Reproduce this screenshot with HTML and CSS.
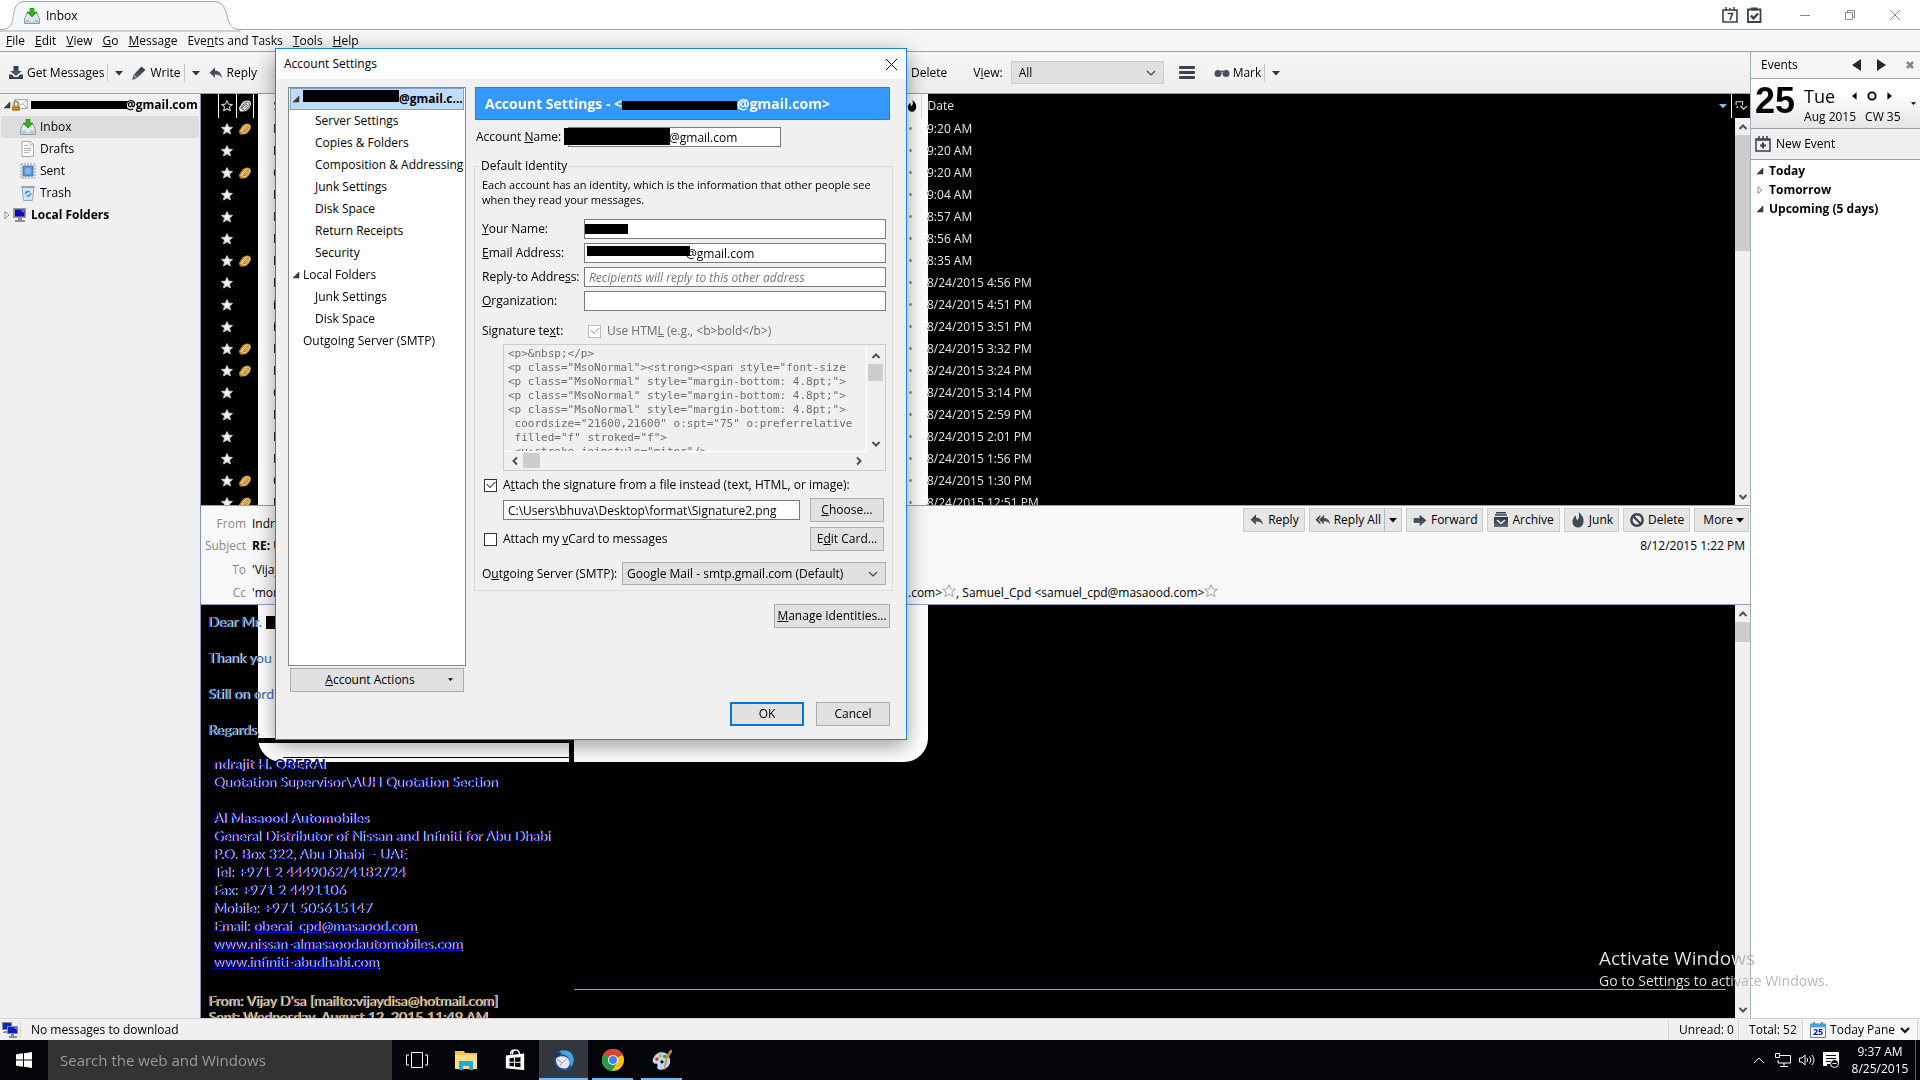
FILE: index.html
```html
<!DOCTYPE html>
<html lang="en">
<head>
<meta charset="utf-8">
<title>Inbox</title>
<link rel="stylesheet" href="styles.css">
</head>
<body>
<svg class="defs" aria-hidden="true">
  <defs>
    <linearGradient id="slate" x1="0" y1="0" x2="0" y2="1"><stop offset="0" stop-color="#2b3640"/><stop offset="1" stop-color="#5d6a76"/></linearGradient>
    <symbol id="i-inbox" viewBox="0 0 16 16"><path d="M3 5h10l2.500 6v4.500H.5V11z" fill="#dfe6ec" stroke="#8b98a5"/><path d="M1.500 11.500h3.500l1 2h4l1-2h3.500v3h-13z" fill="#b4c2cf"/><path d="M6 0h4v4h3L8 9 3 4h3z" fill="#2fb516" stroke="#1a850a" stroke-width=".6"/></symbol>
    <symbol id="i-draft" viewBox="0 0 16 16"><path d="M2 .5h8.500l3 3v12H2z" fill="#fafafa" stroke="#a8a8a8"/><path d="M10 .5V4h3.500M4 4.500h4M4 7.500h7M4 9.500h7M4 11.500h5" fill="none" stroke="#b5b5b5"/></symbol>
    <symbol id="i-sent" viewBox="0 0 16 16"><path d="M1 1h14v14H1z" fill="#f4f4f4" stroke="#9a9a9a" stroke-dasharray="2 1"/><path d="M3 3h10v10H3z" fill="#5e9ad6" stroke="#3a74b4"/><circle cx="8" cy="8" r="3" fill="#86b7e6"/></symbol>
    <symbol id="i-trash" viewBox="0 0 16 16"><path d="M2 2h12l-1.500 13.500h-9z" fill="#d3e5f4" stroke="#8fa5ba"/><path d="M1.500 2h13" stroke="#9aa5b0" stroke-width="2"/><path d="M5.500 9a2.500 2.500 0 0 1 4-2M10.500 8a2.500 2.500 0 0 1-4 2.500" fill="none" stroke="#3d8cd0" stroke-width="1.500"/></symbol>
    <symbol id="i-account" viewBox="0 0 16 16"><path d="M2.500 2.500h13v9h-13z" fill="#f6f6f6" stroke="#a9a9a9"/><path d="M3 3l6 5 6-5M3 11l4-4M15 11l-4-4" fill="none" stroke="#b4b4b4"/><path d="M2 9V6.500a2 2 0 0 1 4 0V9" fill="none" stroke="#a88a45" stroke-width="1.500"/><path d="M0 8h8v6H0z" fill="#cda650"/><path d="M0 10.500h8M0 12.500h8" stroke="#8d6d28"/></symbol>
    <symbol id="i-pc" viewBox="0 0 16 16"><path d="M1 1h13v10H1z" fill="#9c9c9c"/><path d="M3 2.500h9.500v7H3z" fill="#0b0bb4"/><path d="M8 3l4 0v3z" fill="#5c6cff"/><path d="M6 11h4v2H6zM3 13h10v2H3z" fill="#8f8f96"/></symbol>
    <symbol id="i-net" viewBox="0 0 16 16"><path d="M0 0h10v8H0zM3 9h3v2H1v-1z" fill="#8b8b93"/><path d="M1 1h8v6H1z" fill="#1020c8"/><path d="M5 4h11v8H5zM9 12h3v2h3v2H7v-2h2z" fill="#8b8b93"/><path d="M6 5h9v6H6z" fill="#1020c8"/><path d="M11 5h4v3z" fill="#5878ff"/></symbol>
    <symbol id="i-get" viewBox="0 0 16 16"><path d="M5.500 1h5v5h3.500L8 11 2 6h3.500z" fill="url(#slate)"/><path d="M1 9.500h3l2 2.500h4l2-2.500h3V14H1z" fill="#36424d"/></symbol>
    <symbol id="i-write" viewBox="0 0 16 16"><path d="M10.500 1.500l4 3.500-9 8.500L1 15l1.500-5z" fill="url(#slate)"/><path d="M3 10l2.500 3" stroke="#f4f4f4" stroke-width=".8"/></symbol>
    <symbol id="i-reply" viewBox="0 0 16 16"><path d="M7 2.500v3.200c4 0 6.500 2.500 7 7.300-1.500-2.500-3.500-3.500-7-3.500V13L1.500 7.700z" fill="url(#slate)"/></symbol>
    <symbol id="i-replyall" viewBox="0 0 18 16"><path d="M6 2.500v2.200L3.500 7.700 6 10.500V13L.5 7.700z" fill="#36424d"/><path d="M10 2.500v3.200c4 0 6.500 2.500 7 7.300-1.500-2.500-3.500-3.500-7-3.500V13L4.500 7.700z" fill="url(#slate)"/></symbol>
    <symbol id="i-forward" viewBox="0 0 16 16"><path d="M2 6.500h6V3.500L14 8.500l-6 5v-3H2z" fill="url(#slate)" stroke="#2b3640" stroke-width=".6"/></symbol>
    <symbol id="i-archive" viewBox="0 0 16 16"><path d="M3 .8h10M2 3h12" stroke="#36424d" stroke-width="1.400"/><path d="M1 5h14v10H1z" fill="url(#slate)"/><path d="M4 8l4 3.500L12 8" fill="none" stroke="#fff" stroke-width="1.300"/></symbol>
    <symbol id="i-flame" viewBox="0 0 16 16"><path d="M8.500 0C13 4 14 6.500 13.500 10a5.500 5.500 0 0 1-11 0C2.300 7.500 3.500 5 6 3.500c0 2 0 3.500 1.200 4.500C9.500 6.500 9.500 3 8.500 0z" fill="currentColor"/></symbol>
    <symbol id="i-ban" viewBox="0 0 16 16"><circle cx="8" cy="8" r="5.700" fill="none" stroke="#36424d" stroke-width="2.400"/><path d="M4.500 4.500l7 7" stroke="#36424d" stroke-width="2.200"/></symbol>
    <symbol id="i-glasses" viewBox="0 0 16 16"><circle cx="4" cy="8.500" r="3.500" fill="#46525d"/><circle cx="12" cy="8.500" r="3.500" fill="#46525d"/><path d="M6 7q2-1.500 4 0" stroke="#46525d" fill="none" stroke-width="1.300"/></symbol>
    <symbol id="i-caret" viewBox="0 0 8 8"><path d="M0 2h8L4 6.500z" fill="currentColor"/></symbol>
    <symbol id="i-chev" viewBox="0 0 10 10"><path d="M1 3l4 4 4-4" fill="none" stroke="currentColor" stroke-width="1.200"/></symbol>
    <symbol id="i-sb" viewBox="0 0 10 10"><path d="M1.500 7L5 3.500 8.500 7" fill="none" stroke="#505050" stroke-width="2"/></symbol>
    <symbol id="i-star" viewBox="0 0 14 14"><path d="M7 .8l1.800 4 4.400.4-3.300 2.900 1 4.400L7 10.200l-3.900 2.300 1-4.400L.8 5.200l4.400-.4z" fill="currentColor" stroke="var(--edge)" stroke-width="1.200" stroke-linejoin="round"/></symbol>
    <symbol id="i-clip" viewBox="0 0 14 14"><path d="M0 9L4 3Q6.500.5 10 .5q3.500 0 4 3.500 0 3-2.500 6Q9 13.500 5 13.500H1.500Q0 12 0 9z" fill="currentColor"/><path d="M2 10.500L5.500 4.500Q8 2 10.500 2.500t1.500 4L9 10.500q-2.500 2-4.500 1T4.500 8L7.500 5q2-1 2 1L7 9" fill="none" stroke="var(--edge)" stroke-width=".9"/></symbol>
    <symbol id="i-open" viewBox="0 0 8 8"><path d="M7 1v6H1z" fill="#404040" stroke="#202020" stroke-width=".5"/></symbol>
    <symbol id="i-closed" viewBox="0 0 8 8"><path d="M2 .5L6 4 2 7.500z" fill="#fff" stroke="#8a8a8a"/></symbol>
    <symbol id="i-calnew" viewBox="0 0 16 16"><path d="M1 3h14v12H1z" fill="none" stroke="#36424d" stroke-width="1.500"/><path d="M1 4h14M4 0v3M8 0v3M12 0v3" stroke="#36424d" stroke-width="1.500"/><path d="M8 6.500v6M5 9.500h6" stroke="#36424d" stroke-width="2"/></symbol>
    <symbol id="i-cal7" viewBox="0 0 16 16"><path d="M1 3h14v12H1z" fill="none" stroke="#36424d" stroke-width="1.600"/><path d="M4 0v4M8 1v2M12 0v4" stroke="#36424d" stroke-width="1.500"/><path d="M5.500 6.500h5L8 13" fill="none" stroke="#36424d" stroke-width="1.600"/></symbol>
    <symbol id="i-task" viewBox="0 0 16 16"><path d="M2 2.500h12.500V15H2z" fill="none" stroke="#36424d" stroke-width="1.800"/><path d="M5 .5h6.500v3H5z" fill="#36424d"/><path d="M5 8.500l2.500 3 4.500-5" fill="none" stroke="#36424d" stroke-width="2.400"/></symbol>
    <symbol id="i-cal25" viewBox="0 0 16 16"><path d="M.5 2h15v13.500H.5z" fill="#fff" stroke="#707a88"/><path d="M0 2h16v3.500H0z" fill="#4aa3e8"/><path d="M4 0v4M12 0v4" stroke="#888" stroke-width="2"/></symbol>
  </defs>
</svg>

<header class="tabstrip">
  <div class="tab">
    <svg class="tab-shape" viewBox="0 0 240 30" aria-hidden="true"><path d="M0 29.500C14 29.500 12 20 14 12 16 4 19 1.500 25 1.500H213C220 1.500 224 5 226 12 229 22 229 29.500 240 29.500V31H0z" fill="#f7f7f7" stroke="#a0a8b8"/></svg>
    <svg class="ic16"><use href="#i-inbox"/></svg><span>Inbox</span>
  </div>
  <div class="caption">
    <svg class="ic16"><use href="#i-cal7"/></svg>
    <svg class="ic16 task"><use href="#i-task"/></svg>
    <button class="cap" aria-label="Minimize"><svg viewBox="0 0 10 10"><path d="M0 5.500h10"/></svg></button>
    <button class="cap" aria-label="Restore"><svg viewBox="0 0 10 10"><path d="M.5 2.500h7v7h-7zM2.500 2.500v-2h7v7h-2"/></svg></button>
    <button class="cap" aria-label="Close"><svg viewBox="0 0 10 10"><path d="M0 0l10 10M10 0L0 10"/></svg></button>
  </div>
</header>

<nav class="menubar">
  <a href="#"><u>F</u>ile</a><a href="#"><u>E</u>dit</a><a href="#"><u>V</u>iew</a><a href="#"><u>G</u>o</a><a href="#"><u>M</u>essage</a><a href="#">Eve<u>n</u>ts and Tasks</a><a href="#"><u>T</u>ools</a><a href="#"><u>H</u>elp</a>
</nav>

<div class="main">
  <div class="mail">
    <div class="toolbar">
      <div class="tools">
        <button class="tool"><svg class="ic16"><use href="#i-get"/></svg>Get Messages</button>
        <button class="drop" aria-label="Get options"><svg class="ic8"><use href="#i-caret"/></svg></button>
        <button class="tool"><svg class="ic16"><use href="#i-write"/></svg>Write</button>
        <button class="drop" aria-label="Write options"><svg class="ic8"><use href="#i-caret"/></svg></button>
        <button class="tool"><svg class="ic16"><use href="#i-reply"/></svg>Reply</button>
      </div>
      <div class="tools">
        <button class="tool"><svg class="ic16"><use href="#i-ban"/></svg>Delete</button>
        <label class="view" for="view">V<u>i</u>ew:</label>
        <span class="select"><select id="view"><option>All</option></select><svg class="ic10"><use href="#i-chev"/></svg></span>
        <button class="burger" aria-label="Menu"><i></i><i></i><i></i></button>
        <button class="tool"><svg class="ic16"><use href="#i-glasses"/></svg>Mark</button>
        <button class="drop" aria-label="Mark options"><svg class="ic8"><use href="#i-caret"/></svg></button>
      </div>
    </div>
    <div class="panes">
      <aside class="folders">
        <div class="folder root"><svg class="ic8"><use href="#i-open"/></svg><svg class="ic16"><use href="#i-account"/></svg><span class="redacted"></span>@gmail.com</div>
        <div class="folder on"><svg class="ic16"><use href="#i-inbox"/></svg>Inbox</div>
        <div class="folder"><svg class="ic16"><use href="#i-draft"/></svg>Drafts</div>
        <div class="folder"><svg class="ic16"><use href="#i-sent"/></svg>Sent</div>
        <div class="folder"><svg class="ic16"><use href="#i-trash"/></svg>Trash</div>
        <div class="folder root"><svg class="ic8"><use href="#i-closed"/></svg><svg class="ic16"><use href="#i-pc"/></svg>Local Folders</div>
      </aside>
      <section class="content">
        <div class="threads">
          <table>
            <colgroup><col class="c-lead"><col class="c-star"><col class="c-clip"><col class="c-subject"><col class="c-junk"><col></colgroup>
            <thead><tr><th></th><th><svg class="ic12 hollow"><use href="#i-star"/></svg></th><th><svg class="ic12 pale"><use href="#i-clip"/></svg></th><th>S</th><th><svg class="ic12"><use href="#i-flame"/></svg></th><th>Date</th></tr></thead>
            <tbody>
              <tr><td></td><td><svg class="ic12"><use href="#i-star"/></svg></td><td><svg class="ic12"><use href="#i-clip"/></svg></td><td>F</td><td>•</td><td>9:20 AM</td></tr>
              <tr><td></td><td><svg class="ic12"><use href="#i-star"/></svg></td><td></td><td>I</td><td>•</td><td>9:20 AM</td></tr>
              <tr><td></td><td><svg class="ic12"><use href="#i-star"/></svg></td><td><svg class="ic12"><use href="#i-clip"/></svg></td><td>C</td><td>•</td><td>9:20 AM</td></tr>
              <tr><td></td><td><svg class="ic12"><use href="#i-star"/></svg></td><td></td><td>I</td><td>•</td><td>9:04 AM</td></tr>
              <tr><td></td><td><svg class="ic12"><use href="#i-star"/></svg></td><td></td><td>I</td><td>•</td><td>8:57 AM</td></tr>
              <tr><td></td><td><svg class="ic12"><use href="#i-star"/></svg></td><td></td><td>I</td><td>•</td><td>8:56 AM</td></tr>
              <tr><td></td><td><svg class="ic12"><use href="#i-star"/></svg></td><td><svg class="ic12"><use href="#i-clip"/></svg></td><td>I</td><td>•</td><td>8:35 AM</td></tr>
              <tr><td></td><td><svg class="ic12"><use href="#i-star"/></svg></td><td></td><td>I</td><td>•</td><td>8/24/2015 4:56 PM</td></tr>
              <tr><td></td><td><svg class="ic12"><use href="#i-star"/></svg></td><td></td><td>i</td><td>•</td><td>8/24/2015 4:51 PM</td></tr>
              <tr><td></td><td><svg class="ic12"><use href="#i-star"/></svg></td><td></td><td>i</td><td>•</td><td>8/24/2015 3:51 PM</td></tr>
              <tr><td></td><td><svg class="ic12"><use href="#i-star"/></svg></td><td><svg class="ic12"><use href="#i-clip"/></svg></td><td>I</td><td>•</td><td>8/24/2015 3:32 PM</td></tr>
              <tr><td></td><td><svg class="ic12"><use href="#i-star"/></svg></td><td><svg class="ic12"><use href="#i-clip"/></svg></td><td>I</td><td>•</td><td>8/24/2015 3:24 PM</td></tr>
              <tr><td></td><td><svg class="ic12"><use href="#i-star"/></svg></td><td></td><td>C</td><td>•</td><td>8/24/2015 3:14 PM</td></tr>
              <tr><td></td><td><svg class="ic12"><use href="#i-star"/></svg></td><td></td><td>I</td><td>•</td><td>8/24/2015 2:59 PM</td></tr>
              <tr><td></td><td><svg class="ic12"><use href="#i-star"/></svg></td><td></td><td>I</td><td>•</td><td>8/24/2015 2:01 PM</td></tr>
              <tr><td></td><td><svg class="ic12"><use href="#i-star"/></svg></td><td></td><td>I</td><td>•</td><td>8/24/2015 1:56 PM</td></tr>
              <tr><td></td><td><svg class="ic12"><use href="#i-star"/></svg></td><td><svg class="ic12"><use href="#i-clip"/></svg></td><td>C</td><td>•</td><td>8/24/2015 1:30 PM</td></tr>
              <tr><td></td><td><svg class="ic12"><use href="#i-star"/></svg></td><td><svg class="ic12"><use href="#i-clip"/></svg></td><td>I</td><td>•</td><td>8/24/2015 12:51 PM</td></tr>
            </tbody>
          </table>
          <div class="picker"><svg class="ic8 sort"><use href="#i-caret"/></svg><svg class="cols" viewBox="0 0 12 10"><path d="M1 4V1h6v3M1 6h2M7 6l-2-1M5 5l3 3 3-3" fill="none" stroke="#ddd"/></svg></div>
          <div class="scroll list-scroll"><svg class="ic10"><use href="#i-sb"/></svg><i></i><svg class="ic10 down"><use href="#i-sb"/></svg></div>
        </div>
        <div class="msghead">
          <div class="actions">
            <button><svg class="ic16"><use href="#i-reply"/></svg>Reply</button>
            <button class="split"><svg class="ic16"><use href="#i-replyall"/></svg>Reply All<span><svg class="ic8"><use href="#i-caret"/></svg></span></button>
            <button><svg class="ic16"><use href="#i-forward"/></svg>Forward</button>
            <button><svg class="ic16"><use href="#i-archive"/></svg>Archive</button>
            <button><svg class="ic16 slate"><use href="#i-flame"/></svg>Junk</button>
            <button><svg class="ic16"><use href="#i-ban"/></svg>Delete</button>
            <button>More<svg class="ic8"><use href="#i-caret"/></svg></button>
          </div>
          <dl>
            <dt>From</dt><dd>Indra</dd>
            <dt>Subject</dt><dd><b>RE: U</b><time>8/12/2015 1:22 PM</time></dd>
            <dt>To</dt><dd>'Vijay</dd>
            <dt>Cc</dt><dd><span class="cc-first">'mon</span>.com&gt;<svg class="ic14"><use href="#i-star"/></svg>, Samuel_Cpd &lt;samuel_cpd@masaood.com&gt;<svg class="ic14"><use href="#i-star"/></svg></dd>
          </dl>
        </div>
        <div class="body">
          <div class="patch"></div>
          <div class="frame"></div>
          <div class="rule"></div>
          <div class="letter">
            <p>Dear Mr. <span class="redacted"></span></p>
            <p>Thank you</p>
            <p>Still on ord</p>
            <p>Regards,</p>
            <div class="sign">
              <b>ndrajit H. OBERAI</b><br>Quotation Supervisor\AUH Quotation Section<br><br>
              <b>Al Masaood Automobiles</b><br>General Distributor of Nissan and Infiniti for Abu Dhabi<br>P.O. Box 322, Abu Dhabi – UAE<br>Tel: +971 2 4449062/4182724<br>Fax: +971 2 4491106<br>Mobile: +971 505615147<br>Email: <a href="#">oberai_cpd@masaood.com</a><br><a href="#">www.nissan-almasaoodautomobiles.com</a><br><a href="#">www.infiniti-abudhabi.com</a>
            </div>
            <div class="quoted">From: Vijay D'sa [mailto:vijaydisa@hotmail.com]<br>Sent: Wednesday, August 12, 2015 11:49 AM</div>
          </div>
          <div class="scroll body-scroll"><svg class="ic10"><use href="#i-sb"/></svg><i></i><svg class="ic10 down"><use href="#i-sb"/></svg></div>
        </div>
      </section>
    </div>
  </div>

  <aside class="today">
    <div class="ev-head"><span>Events</span><svg class="nav" viewBox="0 0 34 12"><path d="M9 0v12L0 6zM25 0v12l9-6z" fill="#1f2a33"/></svg><svg class="ev-x" viewBox="0 0 8 8"><path d="M1 1l6 6M7 1L1 7" stroke="#7d8a96" stroke-width="2.500"/></svg></div>
    <div class="ev-date">
      <strong>25</strong>
      <div class="ev-info"><div class="ev-day">Tue<svg viewBox="0 0 44 12"><path d="M5 2v8L0 6zM39 2v8l5-4z"/><circle cx="22" cy="6" r="4" fill="none" stroke="#000" stroke-width="2"/></svg></div><div class="ev-week"><span>Aug 2015</span><span>CW 35</span></div></div>
      <svg class="ev-caret"><use href="#i-caret"/></svg>
    </div>
    <button class="ev-new"><svg class="ic16"><use href="#i-calnew"/></svg>New Event</button>
    <ul><li><svg class="ic8"><use href="#i-open"/></svg>Today</li><li><svg class="ic8"><use href="#i-closed"/></svg>Tomorrow</li><li><svg class="ic8"><use href="#i-open"/></svg>Upcoming (5 days)</li></ul>
  </aside>
</div>

<footer class="status">
  <span class="st-net"><svg class="ic16"><use href="#i-net"/></svg></span>
  <span class="st-text">No messages to download</span>
  <span class="st-cell unread">Unread: 0</span><span class="st-cell total">Total: 52</span>
  <button><span class="cal"><svg class="ic16"><use href="#i-cal25"/></svg><b>25</b></span>Today Pane<svg class="ic12"><path d="M2 4l4 4 4-4" fill="none" stroke="#111" stroke-width="2.200"/></svg></button>
</footer>

<div class="taskbar">
  <button class="start" aria-label="Start"><svg viewBox="0 0 16 16"><path d="M0 2.300L7 1.300v6.200H0zM8 1.200L16 0v7.500H8zM0 8.500h7v6.200L0 13.700zM8 8.500h8V16l-8-1.200z" fill="#fff"/></svg></button>
  <input class="search" type="text" aria-label="Search" placeholder="Search the web and Windows">
  <button class="app" aria-label="Task view"><svg viewBox="0 0 22 16"><path d="M5.500 .5h11v15h-11zM3 3H.5v10H3M19 3h2.500v10H19" fill="none" stroke="#fff"/></svg></button>
  <button class="app" aria-label="File Explorer"><svg viewBox="0 0 22 20"><path d="M0 1h9l1 2h12v16H0z" fill="#f5c84b"/><path d="M0 5h22v14H0z" fill="#fbdf84"/><path d="M4 11h14v9h-4v-4H8v4H4z" fill="#1fa9ea"/></svg></button>
  <button class="app" aria-label="Store"><svg viewBox="0 0 22 24"><path d="M6 6Q6 1 11 1t5 5M8 6q0-4 3-5" fill="none" stroke="#fff" stroke-width="1.500"/><path d="M1 7l20-2v18L1 21z" fill="#fff"/><path d="M5 10l5-.5V14H5zM11 9.400l6-.5V14h-6zM5 15h5v4l-5-.5zM11 15h6v5l-6-.7z" fill="#05070b"/></svg></button>
  <button class="app on run" aria-label="Thunderbird"><svg viewBox="0 0 24 24"><path d="M4 4Q12-2 19 3q6 6 3 14-2 5-7 7-8 0-12-5-4-8 1-15z" fill="#17508f"/><path d="M8 2q9-2 13 4 4 8-2 14 1-10-5-13-4-2-8-1z" fill="#4aa5e6"/><path d="M3 11q3-4 7-3 6 0 8 5 1 5-3 8-6 1-9-2-3-3-3-8z" fill="#e9ebee"/><path d="M4 11l6 4 5-4M7 19l3-4" fill="none" stroke="#8d949c"/><path d="M1 9q3-6 9-5-3 1-4 4z" fill="#0e3468"/></svg></button>
  <button class="app run" aria-label="Chrome"><svg viewBox="0 0 22 22"><circle cx="11" cy="11" r="11" fill="#fbc116"/><path d="M11 11L1.500 5.500A11 11 0 0 1 20.500 5.500z" fill="#dd4235"/><path d="M1.500 5.500A11 11 0 0 0 10 22l5-8.500-4-2.500z" fill="#259c50"/><path d="M11 6h9.800" stroke="#dd4235" stroke-width="1.500"/><circle cx="11" cy="11" r="5" fill="#fff"/><circle cx="11" cy="11" r="4" fill="#3f84ee"/></svg></button>
  <button class="app run" aria-label="Paint"><svg viewBox="0 0 24 24"><path d="M3 9q5-8 14-4 7 6 2 14-5 5-11 3-2-1-1-4t-3-2q-4-2-1-7z" fill="#b9dcf2"/><circle cx="6.500" cy="11" r="2" fill="#e0392b"/><circle cx="10" cy="7.500" r="2" fill="#e8a52a"/><circle cx="15" cy="8" r="2" fill="#35a344"/><circle cx="12" cy="14" r="1.700" fill="#05070b"/><path d="M20 2q3-3 3 1l-5 8-3 12-1-1 2-12z" fill="#d9822b"/></svg></button>
  <div class="tray">
    <svg class="t-up" viewBox="0 0 12 8"><path d="M1 7l5-5 5 5"/></svg>
    <svg class="t-net" viewBox="0 0 16 14"><path d="M4 2.500h11.500v7.500H3V7M.5 .5h4v4h-4zM9 10v3M5 13.500h8"/></svg>
    <svg class="t-net" viewBox="0 0 16 14"><path d="M.5 5h2.500L6 2v10L3 9H.5zM8 5q1.500 2 0 4M10.500 3.500q3 3.500 0 7M13 2q4 5 0 10"/></svg>
    <svg class="t-note" viewBox="0 0 16 16"><path d="M0 0h16v12H4v2H0z" fill="#fff" stroke="none"/><path d="M3 3.500h10M3 6.500h10M3 9.500h5" stroke="#05070b"/><circle cx="11.500" cy="11.500" r="4" fill="#05070b"/><path d="M9.500 11.500h4"/></svg>
    <div class="clock">9:37 AM<br>8/25/2015</div>
  </div>
</div>

<div class="watermark"><div class="wm-big">Activate Windows</div><div class="wm-small">Go to Settings to activate Windows.</div></div>

<form class="dialog" role="dialog" aria-label="Account Settings">
  <div class="d-title"><span>Account Settings</span><button type="button" aria-label="Close"><svg viewBox="0 0 11 11"><path d="M0 0l11 11M11 0L0 11" stroke="#000"/></svg></button></div>
  <div class="d-main">
    <div class="d-side">
      <ul class="tree">
        <li class="l0 sel"><svg class="ic8"><use href="#i-open"/></svg><span class="redacted"></span>@gmail.c...</li>
        <li>Server Settings</li><li>Copies &amp; Folders</li><li>Composition &amp; Addressing</li><li>Junk Settings</li><li>Disk Space</li><li>Return Receipts</li><li>Security</li>
        <li class="l0"><svg class="ic8"><use href="#i-open"/></svg>Local Folders</li>
        <li>Junk Settings</li><li>Disk Space</li>
        <li class="l0 leaf">Outgoing Server (SMTP)</li>
      </ul>
      <button type="button" class="acts"><span><u>A</u>ccount Actions</span><svg><use href="#i-caret"/></svg></button>
    </div>
    <div class="d-page">
      <h1>Account Settings - &lt;<span class="redacted"></span>@gmail.com&gt;</h1>
      <div class="name"><label for="an">Account <u>N</u>ame:</label><input id="an" type="text" value="@gmail.com"><span class="redacted"></span></div>
      <fieldset>
        <legend>Default Identity</legend>
        <p>Each account has an identity, which is the information that other people see when they read your messages.</p>
        <div class="grid">
          <label for="yn"><u>Y</u>our Name:</label><div class="field"><input id="yn" type="text"><span class="redacted r-name"></span></div>
          <label for="em"><u>E</u>mail Address:</label><div class="field"><input id="em" class="em" type="text" value="@gmail.com"><span class="redacted r-mail"></span></div>
          <label for="rt">Reply-to Addre<u>s</u>s:</label><div class="field"><input id="rt" type="text" placeholder="Recipients will reply to this other address"></div>
          <label for="or"><u>O</u>rganization:</label><div class="field"><input id="or" type="text"></div>
        </div>
        <div class="sigrow"><label for="sig">Signature te<u>x</u>t:</label><input id="html" type="checkbox" checked disabled><label for="html" class="dim">Use HTM<u>L</u> (e.g., &lt;b&gt;bold&lt;/b&gt;)</label></div>
        <div class="sigbox">
          <textarea id="sig" wrap="off" disabled>&lt;p&gt;&amp;nbsp;&lt;/p&gt;
&lt;p class="MsoNormal"&gt;&lt;strong&gt;&lt;span style="font-size
&lt;p class="MsoNormal" style="margin-bottom: 4.8pt;"&gt;
&lt;p class="MsoNormal" style="margin-bottom: 4.8pt;"&gt;
&lt;p class="MsoNormal" style="margin-bottom: 4.8pt;"&gt;
 coordsize="21600,21600" o:spt="75" o:preferrelative
 filled="f" stroked="f"&gt;
 &lt;v:stroke joinstyle="miter"/&gt;</textarea>
          <div class="scroll v"><svg class="ic10"><use href="#i-sb"/></svg><i></i><svg class="ic10 down"><use href="#i-sb"/></svg></div>
          <div class="scroll h"><svg class="ic10 left"><use href="#i-sb"/></svg><i></i><svg class="ic10 right"><use href="#i-sb"/></svg></div>
        </div>
        <div class="check"><input id="att" type="checkbox" checked><label for="att">A<u>t</u>tach the signature from a file instead (text, HTML, or image):</label></div>
        <div class="file"><input type="text" aria-label="Signature file" value="C:\Users\bhuva\Desktop\format\Signature2.png"><button type="button"><u>C</u>hoose...</button></div>
        <div class="card"><input id="vc" type="checkbox"><label for="vc">Attach my <u>v</u>Card to messages</label><button type="button">E<u>d</u>it Card...</button></div>
        <div class="smtp"><label for="smtp">O<u>u</u>tgoing Server (SMTP):</label><span class="select"><select id="smtp"><option>Google Mail - smtp.gmail.com (Default)</option></select><svg class="ic10"><use href="#i-chev"/></svg></span></div>
      </fieldset>
      <button type="button" class="manage"><u>M</u>anage Identities...</button>
      <div class="d-foot"><button type="button" class="ok">OK</button><button type="button">Cancel</button></div>
    </div>
  </div>
</form>
</body>
</html>
```
FILE: styles.css
```css
* { box-sizing: border-box; }
html, body { height: 100%; }
body {
  margin: 0;
  display: flex;
  flex-direction: column;
  overflow: hidden;
  position: relative;
  font: 12px/16px "Open Sans", "Noto Sans", sans-serif;
  color: #000;
  background: #f0f0f0;
}
button, input, select, textarea { font: inherit; color: inherit; margin: 0; padding: 0; border: 0; background: none; border-radius: 0; outline: 0; }
button { display: flex; align-items: center; white-space: nowrap; }
a { color: inherit; text-decoration: none; }
ul { list-style: none; margin: 0; padding: 0; }
svg { display: block; flex: none; overflow: visible; }
.defs { position: absolute; width: 0; height: 0; }
.ic8 { width: 8px; height: 8px; }
.ic10 { width: 10px; height: 10px; }
.ic12 { width: 12px; height: 12px; }
.ic14 { width: 14px; height: 14px; }
.ic16 { width: 16px; height: 16px; }
.redacted { background: #000; flex: none; }

/* Window top */
.tabstrip { flex: none; height: 30px; display: flex; justify-content: space-between; background: #fff; border-bottom: 1px solid #a0a8b8; }
.tab { position: relative; width: 240px; height: 30px; padding: 2px 0 0 24px; display: flex; align-items: center; gap: 6px; }
.tab > * { position: relative; }
.tab .tab-shape { position: absolute; inset: 0; width: 240px; height: 30px; }
.caption { display: flex; align-items: center; padding-right: 20px; }
.caption .task { margin: 0 38px 0 8px; }
.cap { width: 10px; height: 28px; margin-left: 35px; }
.caption .task + .cap { margin-left: 0; }
.cap svg { width: 10px; height: 10px; fill: none; stroke: #8a8a8a; }
.menubar { flex: none; height: 22px; padding: 0 6px; display: flex; align-items: center; gap: 10px; background: #f6f6f6; border-bottom: 1px solid #a0a0a0; }

.main { flex: 1; min-height: 0; display: flex; }
.mail { flex: 1; min-width: 0; display: flex; flex-direction: column; }
.toolbar { flex: none; height: 42px; display: flex; background: linear-gradient(#f7f7f7, #ededed); border-bottom: 1px solid #a0a0a0; }
.tools { display: flex; align-items: center; padding-left: 8px; }
.tools:first-child { width: 884px; }
.tool { gap: 3px; }
.drop { height: 18px; width: 24px; padding-left: 7px; margin-left: 3px; border-left: 1px solid #c3c8d0; color: #2b3640; }
.view { margin: 0 8px 0 26px; }
.select { position: relative; display: block; }
.select select { appearance: none; width: 100%; height: 100%; }
.select svg { position: absolute; right: 7px; top: 6px; color: #444; pointer-events: none; }
.toolbar .select { width: 153px; height: 23px; border: 1px solid #ccc; background: #e1e1e1; }
.toolbar select { padding-left: 7px; }
.burger { flex-direction: column; gap: 2px; margin: 0 19px 0 15px; width: 16px; }
.burger i { width: 16px; height: 3px; border-radius: 1px; background: #3a4450; }

.panes { flex: 1; min-height: 0; display: flex; }
.folders { width: 201px; flex: none; padding: 0 1px; border-right: 1px solid #8296ac; background: #f0f0f0; }
.folder { height: 22px; padding-left: 19px; display: flex; align-items: center; gap: 4px; }
.folder.on { background: #dcdcdc; }
.folder.root { padding-left: 2px; gap: 1px; font-weight: 700; }
.folder.root .ic16 { margin-right: 2px; }
.folder .redacted { width: 96px; height: 8px; margin-right: -3px; }

.content { flex: 1; min-width: 0; display: flex; flex-direction: column; }
.threads { position: relative; flex: 1 1 411px; min-height: 0; overflow: hidden; background: linear-gradient(90deg, #000 57px, #fff 57px 727px, #000 727px); }
.threads table { table-layout: fixed; width: 100%; border-collapse: collapse; }
.c-lead, .c-clip { width: 17px; }
.c-star { width: 18px; }
.c-subject { width: 651px; }
.c-junk { width: 17px; }
.threads th { height: 24px; padding: 0; font-weight: 400; }
.threads td { height: 22px; padding: 0; text-align: center; }
.threads th:nth-child(1), .threads th:nth-child(2), .threads th:nth-child(3) { border-right: 1px solid #fff; }
.threads th:nth-child(5) { border-right: 1px solid #ddd; }
.threads td:nth-child(5) { color: #888; padding-right: 4px; }
.threads tr > :nth-child(4) { text-align: left; padding-left: 20px; }
.threads tr > :nth-child(6) { text-align: left; padding-left: 6px; color: #e6e6e6; mix-blend-mode: difference; }
.threads svg { margin: 0 auto; }
.threads td:nth-child(2) { color: #f4f4f4; --edge: #ccc; }
.threads td:nth-child(3) { color: #b98a2d; --edge: #ffe9ae; }
.hollow { color: #000; --edge: #ddd; }
.pale { color: #eee; --edge: #222; }
.picker { position: absolute; right: 0; top: 0; height: 24px; display: flex; align-items: center; }
.picker .sort { color: #7db8e8; }
.picker .cols { width: 19px; height: 24px; margin-left: 4px; padding: 0 2px 0 3px; border-left: 1px solid #fff; }
.scroll { display: flex; align-items: center; background: #f0f0f0; }
.scroll i { background: #cdcdcd; }
.down { transform: rotate(180deg); }
.left { transform: rotate(-90deg); }
.right { transform: rotate(90deg); }
.list-scroll, .body-scroll { position: absolute; right: 0; bottom: 0; width: 15px; flex-direction: column; padding: 4px 0 3px; }
.list-scroll { top: 24px; }
.body-scroll { top: 0; }
.scroll i { margin: 3px 0; }
.list-scroll i { width: 15px; height: 116px; }
.body-scroll i { width: 15px; height: 20px; }
.list-scroll .down, .body-scroll .down { margin-top: auto; }

.msghead { flex: none; position: relative; height: 100px; padding-top: 9px; border: solid #8ea0b8; border-width: 1px 0; background: #f8f8f8; }
.actions { position: absolute; z-index: 1; right: 1px; top: 2px; display: flex; gap: 4px; }
.actions button { height: 24px; padding: 0 5px; gap: 3px; border: 1px solid #ccc; background: #e6e6e6; }
.actions button:last-child { padding: 0 4px 0 8px; }
.actions .split { padding-right: 0; }
.split span { height: 22px; display: flex; align-items: center; border-left: 1px solid #b0b8c4; padding: 0 4px; }
.slate { color: #3f4b56; }
.msghead dl { margin: 0; display: grid; grid-template: 22px 24px 23px 20px / 45px 1fr; column-gap: 6px; }
.msghead dl > * { margin: 0; white-space: nowrap; line-height: 18px; }
.msghead dt { text-align: right; color: #8a8a8a; }
.msghead dd { display: flex; }
.msghead time { margin-left: auto; padding-right: 5px; }
.cc-first { width: 656px; flex: none; }
.msghead dd svg { color: #f8f8f8; --edge: #b4b4b4; }

.body { position: relative; flex: 1 1 413px; min-height: 0; overflow: hidden; background: #000; }
.patch { position: absolute; left: 57px; top: 0; width: 670px; height: 157px; background: #fff; border-radius: 0 0 24px 24px; }
.frame { position: absolute; left: 0; top: 133px; width: 373px; height: 24px; border: solid #000; border-width: 5px 5px 0 0; }
.frame::after { content: ""; position: absolute; left: 82px; right: 0; top: 14px; height: 1px; background: #000; }
.rule { position: absolute; left: 373px; right: 24px; top: 384px; height: 1px; background: #93a3b8; }
.letter { position: relative; padding: 8px 7px; font: 14px/18px Lato, "Open Sans", sans-serif; text-shadow: 1px 0 #fff; }
.letter p { margin: 0 0 18px; display: flex; align-items: center; color: #3c6cb0; white-space: pre; }
.letter p .redacted { width: 12px; height: 13px; }
.sign { margin: -2px 0 0 5px; color: #00008b; }
.sign a { color: #0000c8; text-decoration: underline; }
.quoted { margin-top: 22px; color: #b08c58; line-height: 16px; }

/* Today pane */
.today { flex: none; width: 170px; border-left: 1px solid #a0b0c4; background: #fff; }
.ev-head { height: 27px; padding: 0 6px 0 10px; display: flex; align-items: center; border-bottom: 1px solid #a0a0a0; background: #f6f6f6; }
.nav { width: 34px; height: 12px; margin-left: auto; }
.ev-x { width: 8px; height: 8px; margin-left: 20px; }
.ev-date { height: 50px; display: flex; padding: 0 4px; border-bottom: 1px solid #a0a0a0; background: linear-gradient(#fff 30%, #e4e4e4); }
.ev-date strong { font: 700 36px/44px "Liberation Sans", sans-serif; }
.ev-info { margin-left: 9px; padding-top: 4px; }
.ev-day { display: flex; align-items: center; font-size: 18px; line-height: 26px; }
.ev-day svg { width: 40px; height: 12px; margin-left: 17px; }
.ev-week { display: flex; gap: 9px; white-space: nowrap; }
.ev-caret { width: 5px; height: 5px; margin: 22px 0 0 auto; }
.ev-new { width: 100%; height: 31px; padding-left: 4px; gap: 5px; border-bottom: 1px solid #a0a0a0; background: #f0f0f0; }
.today ul { padding-top: 1px; }
.today li { height: 19px; padding-left: 5px; display: flex; align-items: center; gap: 5px; font-weight: 700; }

.status { flex: none; height: 22px; display: flex; align-items: center; border-top: 1px solid #d4d4d4; background: #f0f0f0; }
.st-net { width: 21px; padding-left: 2px; border-right: 1px solid #d4d4d4; }
.st-text { padding-left: 10px; margin-right: auto; }
.st-cell { height: 20px; line-height: 20px; padding-left: 10px; border-left: 1px solid #d4d4d4; }
.unread { width: 70px; }
.total { width: 64px; }
.status button { height: 20px; gap: 4px; margin-right: 2px; padding: 0 6px 0 7px; border: solid #d4d4d4; border-width: 0 1px; background: #f7f7f7; }
.cal { position: relative; }
.cal b { position: absolute; left: 0; right: 0; top: 5px; text-align: center; font-size: 9px; line-height: 10px; color: #0010a0; }

.taskbar { flex: none; height: 40px; display: flex; align-items: stretch; background: #020409; color: #fff; }
.taskbar button { justify-content: center; }
.start { width: 48px; }
.start svg { width: 16px; height: 16px; }
.search { width: 344px; padding: 0 12px; background: #333; font-size: 15px; }
.app { width: 49px; }
.app svg { width: 22px; height: 22px; }
.app.run { position: relative; }
.app.run::after { content: ""; position: absolute; left: 4px; right: 4px; bottom: 0; height: 2px; background: #76b9ed; }
.app.on { background: #33383f; }
.app.on::after { left: 0; right: 0; }
.tray { margin-left: auto; margin-right: 4px; padding-right: 2px; border-right: 1px solid #555; display: flex; align-items: center; gap: 8px; }
.tray svg { fill: none; stroke: #fff; }
.t-up { width: 12px; height: 8px; margin-right: 2px; }
.t-net { width: 16px; height: 14px; }
.t-note { width: 16px; height: 16px; }
.clock { width: 66px; text-align: center; line-height: 17px; }

.watermark { position: absolute; right: 85px; bottom: 89px; width: 236px; }
.watermark div { color: transparent; white-space: nowrap; background: linear-gradient(90deg, #e8e8e8 136px, #b4b4b4 136px); -webkit-background-clip: text; background-clip: text; }
.wm-big { font-size: 19px; line-height: 26px; }
.wm-small { font-size: 14px; line-height: 20px; }

/* Account Settings dialog */
.dialog { position: absolute; left: 275px; top: 48px; width: 632px; border: 1px solid #1883d7; background: #f0f0f0; box-shadow: 0 6px 20px rgba(0, 0, 0, .4); }
.d-title { height: 30px; padding: 0 9px 0 8px; display: flex; align-items: center; justify-content: space-between; background: #fff; }
.d-title svg { width: 11px; height: 11px; }
.d-main { display: flex; gap: 9px; padding: 8px 16px 13px 12px; }
.d-side { width: 178px; flex: none; }
.tree { height: 579px; padding: 0 1px; border: 1px solid #828790; background: #fff; }
.tree li { height: 22px; line-height: 22px; padding-left: 25px; white-space: nowrap; }
.tree .l0 { display: flex; align-items: center; gap: 3px; padding-left: 2px; }
.tree .leaf { padding-left: 13px; }
.tree .sel { border: 1px solid #7da2ce; background: #c1dbfc; font-weight: 700; padding-left: 1px; overflow: hidden; }
.tree .sel .redacted { width: 96px; height: 12px; margin: -6px -3px 0 0; }
.dialog button { justify-content: center; }
.acts, .manage, .d-foot button, .file button, .card button { height: 24px; border: 1px solid #adadad; background: #e1e1e1; }
.dialog .acts { width: 174px; margin: 2px 0 0 2px; position: relative; padding-right: 14px; }
.acts svg { position: absolute; right: 10px; top: 8px; width: 5px; height: 5px; }
.d-page { flex: 1; min-width: 0; }
.d-page input[type="text"] { height: 20px; padding: 0 4px; border: 1px solid #7a7a7a; background: #fff; }
.d-page h1 { margin: 0; height: 33px; padding: 0 9px; display: flex; align-items: center; border: 1px solid #6d6d6d; background: #39f; color: #fff; font-size: 14px; white-space: nowrap; }
h1 .redacted { width: 115px; height: 9px; margin-top: 4px; }
.name { position: relative; display: flex; align-items: center; margin-top: 7px; padding-left: 1px; }
.name input { width: 213px; margin-left: auto; margin-right: 109px; }
.d-page .name input { padding-left: 100px; }
.name .redacted { position: absolute; left: 89px; top: 1px; width: 106px; height: 17px; }
fieldset { margin: 11px -3px 0 -1px; padding: 3px 6px 5px 7px; border: 1px solid #dcdcdc; min-width: 0; }
legend { padding: 0 1px; margin-left: -2px; line-height: 16px; }
fieldset p { margin: 0 0 12px; font-size: 11px; line-height: 15px; }
.grid { display: grid; grid-template-columns: 102px 1fr; row-gap: 4px; align-items: center; white-space: nowrap; }
.field { position: relative; display: flex; }
.field input { width: 100%; }
.d-page .field .em { padding-left: 101px; }
.r-name { position: absolute; left: 1px; top: 5px; width: 43px; height: 10px; }
.r-mail { position: absolute; left: 3px; top: 3px; width: 103px; height: 10px; }
::placeholder { color: #757575; opacity: 1; font-style: italic; }
.search::placeholder { color: #9a9a9a; font-style: normal; }
input[type="checkbox"] { appearance: none; position: relative; flex: none; width: 13px; height: 13px; border: 1px solid #333; background: #fff; }
input[type="checkbox"]:checked::after { content: ""; position: absolute; left: 2px; top: 1px; width: 7px; height: 4px; border: solid #333; border-width: 0 0 1px 1px; transform: rotate(-45deg); }
input[type="checkbox"]:disabled { border-color: #bcbcbc; }
input[type="checkbox"]:disabled::after { border-color: #a8a8a8; }
.sigrow { display: flex; align-items: center; height: 20px; margin: 10px 0 3px; }
.sigrow input { margin: 0 6px 0 auto; }
.sigrow .dim { width: 279px; color: #6d6d6d; }
.sigbox { display: grid; grid-template-columns: 1fr 17px; grid-template-rows: 1fr 17px; height: 127px; margin-left: 21px; padding: 1px; border: 1px solid #ccc; }
.sigbox textarea { resize: none; overflow: hidden; padding: 1px 0 0 3px; border: solid #fff; border-width: 0 1px 1px 0; font: 12px/14px "DejaVu Sans Mono", monospace; font-size: 11px; color: #6d6d6d; }
.scroll.v { flex-direction: column; padding: 5px 0 3px; }
.scroll.v i { width: 15px; height: 17px; }
.scroll.v .down { margin-top: auto; }
.scroll.h { padding: 0 3px 0 5px; }
.scroll.h i { width: 17px; height: 15px; margin: 0 3px; }
.scroll.h .right { margin-left: auto; }
.check, .card { display: flex; align-items: center; gap: 6px; padding-left: 2px; }
.check { height: 20px; margin-top: 4px; white-space: nowrap; }
.file { display: flex; align-items: center; justify-content: space-between; margin: 3px 2px 0 21px; height: 24px; }
.d-page .file input { width: 297px; height: 20px; }
.file button, .card button { width: 74px; }
.card { margin: 5px 2px 0 0; }
.card button { margin-left: auto; }
.smtp { display: flex; align-items: center; justify-content: space-between; margin-top: 11px; }
.smtp .select { width: 264px; height: 23px; border: 1px solid #adadad; background: #e1e1e1; }
.smtp select { padding-left: 4px; }
.dialog .manage { margin: 13px 0 0 auto; width: 116px; }
.d-foot { display: flex; justify-content: flex-end; gap: 12px; margin-top: 74px; }
.d-foot button { width: 74px; }
.d-foot .ok { border: 2px solid #0078d7; }
```
